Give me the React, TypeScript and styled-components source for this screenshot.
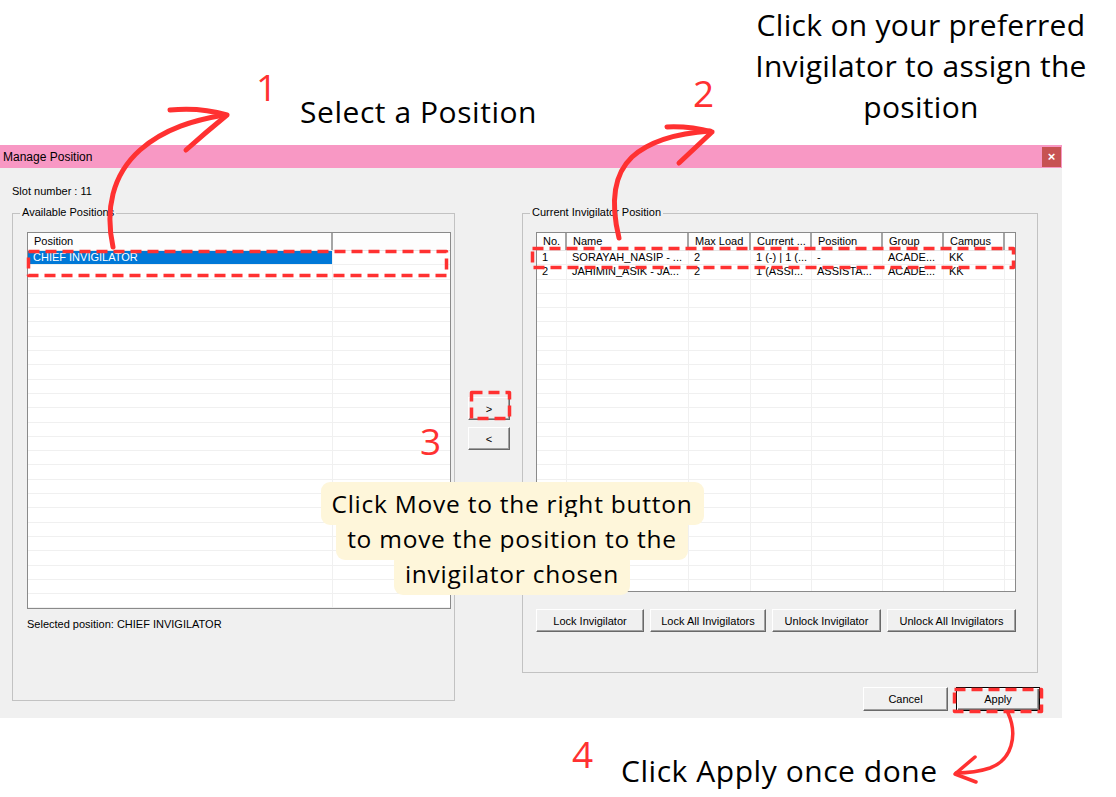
import React from "react";
import styled, { createGlobalStyle } from "styled-components";

const RED = "#ff3131";

const GlobalStyle = createGlobalStyle`
  html, body {
    margin: 0;
    padding: 0;
    background: #ffffff;
  }
  body {
    font-family: "Liberation Sans", Arial, sans-serif;
  }
`;

// ---------- page + annotation canvas ----------

const Page = styled.div`
  position: relative;
  width: 1116px;
  height: 797px;
  overflow: hidden;
  background: #ffffff;
`;

const Note = styled.div<{ $x: number; $y: number }>`
  position: absolute;
  left: ${(p) => p.$x}px;
  top: ${(p) => p.$y}px;
  font-family: "Open Sans", "Noto Sans", sans-serif;
  font-size: 30px;
  line-height: 30px;
  letter-spacing: 0.55px;
  color: #000;
  white-space: nowrap;
`;

const NoteBlock = styled(Note)`
  width: 400px;
  line-height: 41px;
  letter-spacing: 0.3px;
  text-align: center;
`;

const StepNum = styled.div<{ $x: number; $y: number }>`
  position: absolute;
  left: ${(p) => p.$x}px;
  top: ${(p) => p.$y}px;
  font-family: "Open Sans", "Noto Sans", sans-serif;
  font-size: 37px;
  line-height: 36px;
  color: ${RED};
`;

const Callout = styled.div`
  position: absolute;
  left: 262px;
  top: 486px;
  width: 500px;
  text-align: center;
  font-family: "Open Sans", "Noto Sans", sans-serif;
  font-size: 24.5px;
  line-height: 35px;
  letter-spacing: 0.75px;
  color: #000;
`;

const Highlight = styled.span`
  background: #fef6da;
  padding: 5px 11px;
  border-radius: 9px;
  -webkit-box-decoration-break: clone;
  box-decoration-break: clone;
`;

const Overlay = styled.svg`
  position: absolute;
  left: 0;
  top: 0;
  pointer-events: none;
`;

// ---------- dialog ----------

const Dialog = styled.div`
  margin-top: 145px;
  width: 1062px;
  font-size: 11px;
  color: #000;
`;

const TitleBar = styled.div`
  height: 23px;
  box-sizing: border-box;
  padding: 0 1px 0 3px;
  background: #f898c4;
  display: flex;
  align-items: center;
  justify-content: space-between;
`;

const TitleText = styled.span`
  font-size: 12px;
`;

const CloseButton = styled.div`
  width: 19px;
  height: 20px;
  background: #c75252;
  color: #fff;
  display: flex;
  align-items: center;
  justify-content: center;
  font-size: 13px;
  font-weight: bold;
`;

const Body = styled.div`
  height: 550px;
  box-sizing: border-box;
  padding: 17px 0 0 12px;
  background: #f0f0f0;
`;

const Label = styled.div<{ $gap?: number }>`
  line-height: 13px;
  margin-top: ${(p) => p.$gap ?? 0}px;
  white-space: nowrap;
`;

const Columns = styled.div`
  display: flex;
  align-items: flex-start;
  margin-top: 15px;
`;

const Group = styled.div<{ $w: number; $h: number; $left: number }>`
  position: relative;
  width: ${(p) => p.$w}px;
  height: ${(p) => p.$h}px;
  box-sizing: border-box;
  border: 1px solid #c2c2c2;
  padding: 18px 0 0 ${(p) => p.$left}px;
`;

const Caption = styled.span`
  position: absolute;
  top: -8px;
  left: 7px;
  padding: 0 2px;
  line-height: 13px;
  background: #f0f0f0;
  white-space: nowrap;
`;

const MoveColumn = styled.div`
  width: 67px;
  box-sizing: border-box;
  padding: 184px 0 0 13px;
  display: flex;
  flex-direction: column;
  gap: 7px;
`;

const RightColumn = styled.div`
  width: 518px;
  display: flex;
  flex-direction: column;
`;

const ButtonRow = styled.div`
  display: flex;
  gap: 6px;
  margin-top: 17px;
`;

const Footer = styled.div`
  display: flex;
  justify-content: flex-end;
  gap: 8px;
  margin-top: 14px;
`;

const WinButton = styled.button<{ $w: number; $h?: number; $default?: boolean }>`
  width: ${(p) => p.$w}px;
  height: ${(p) => p.$h ?? 23}px;
  padding: 0;
  box-sizing: border-box;
  font-family: "Liberation Sans", Arial, sans-serif;
  font-size: 11px;
  color: #000;
  background: #f0f0f0;
  border: 1px solid;
  border-color: ${(p) => (p.$default ? "#000" : "#fff #696969 #696969 #fff")};
  box-shadow: ${(p) =>
    p.$default
      ? "inset 1px 1px #fff, inset -1px -1px #696969, inset -2px -2px #a0a0a0"
      : "inset -1px -1px #a0a0a0"};
  white-space: nowrap;
`;

// ---------- list view ----------

const ListFrame = styled.div<{ $w: number; $h: number }>`
  width: ${(p) => p.$w}px;
  height: ${(p) => p.$h}px;
  box-sizing: border-box;
  border: 1px solid #8a8a8a;
  background: #fff;
  overflow: hidden;
`;

const HeaderRow = styled.div`
  display: flex;
  height: 18px;
  box-sizing: border-box;
  border-bottom: 1px solid #e5e5e5;
  background: #fdfdfd;
`;

const HeaderCell = styled.div<{ $w?: number }>`
  ${(p) => (p.$w ? `width: ${p.$w}px; flex: none;` : "flex: 1;")}
  box-sizing: border-box;
  padding-left: 6px;
  line-height: 17px;
  border-right: ${(p) => (p.$w ? "2px solid #a5a5a5" : "none")};
  white-space: nowrap;
  overflow: hidden;
`;

const Row = styled.div`
  display: flex;
  height: 14.3px;
  box-sizing: border-box;
  border-bottom: 1px solid #f0f0f0;
`;

const Cell = styled.div<{ $w?: number; $selected?: boolean }>`
  ${(p) => (p.$w ? `width: ${p.$w}px; flex: none;` : "flex: 1;")}
  box-sizing: border-box;
  padding-left: 5px;
  line-height: 13px;
  border-right: ${(p) => (p.$w ? "1px solid #f0f0f0" : "none")};
  background: ${(p) => (p.$selected ? "#0078d7" : "transparent")};
  color: ${(p) => (p.$selected ? "#fff" : "#000")};
  white-space: nowrap;
  overflow: hidden;
`;

type Column = { title: string; width?: number };

const ListView = ({
  columns,
  rows,
  count,
  width,
  height,
  selected,
}: {
  columns: Column[];
  rows: string[][];
  count: number;
  width: number;
  height: number;
  selected?: number;
}) => (
  <ListFrame $w={width} $h={height}>
    <HeaderRow>
      {columns.map((c, i) => (
        <HeaderCell key={i} $w={c.width}>
          {c.title}
        </HeaderCell>
      ))}
    </HeaderRow>
    {Array.from({ length: count }).map((_, r) => (
      <Row key={r}>
        {columns.map((c, i) => (
          <Cell key={i} $w={c.width} $selected={selected === r && i === 0}>
            {rows[r]?.[i] ?? ""}
          </Cell>
        ))}
      </Row>
    ))}
  </ListFrame>
);

const positionColumns: Column[] = [{ title: "Position", width: 305 }, { title: "" }];

const invigilatorColumns: Column[] = [
  { title: "No.", width: 30 },
  { title: "Name", width: 122 },
  { title: "Max Load", width: 62 },
  { title: "Current ...", width: 61 },
  { title: "Position", width: 71 },
  { title: "Group", width: 61 },
  { title: "Campus", width: 61 },
  { title: "" },
];

const invigilators = [
  ["1", "SORAYAH_NASIP - ...", "2", "1 (-) | 1 (...", "-", "ACADE...", "KK"],
  ["2", "JAHIMIN_ASIK - JA...", "2", "1 (ASSI...", "ASSISTA...", "ACADE...", "KK"],
];

const App = () => {
  return (
    <Page>
      <GlobalStyle />
      <Dialog>
        <TitleBar>
          <TitleText>Manage Position</TitleText>
          <CloseButton>×</CloseButton>
        </TitleBar>
        <Body>
          <Label>Slot number : 11</Label>
          <Columns>
            <Group $w={443} $h={488} $left={14}>
              <Caption>Available Positions</Caption>
              <ListView
                columns={positionColumns}
                rows={[["CHIEF INVIGILATOR"]]}
                count={25}
                width={424}
                height={377}
                selected={0}
              />
              <Label $gap={9}>Selected position: CHIEF INVIGILATOR</Label>
            </Group>

            <MoveColumn>
              <WinButton $w={42}>&gt;</WinButton>
              <WinButton $w={42}>&lt;</WinButton>
            </MoveColumn>

            <RightColumn>
              <Group $w={516} $h={460} $left={13}>
                <Caption>Current Invigilator Position</Caption>
                <ListView
                  columns={invigilatorColumns}
                  rows={invigilators}
                  count={24}
                  width={480}
                  height={360}
                />
                <ButtonRow>
                  <WinButton $w={108}>Lock Invigilator</WinButton>
                  <WinButton $w={116}>Lock All Invigilators</WinButton>
                  <WinButton $w={109}>Unlock Invigilator</WinButton>
                  <WinButton $w={129}>Unlock All Invigilators</WinButton>
                </ButtonRow>
              </Group>
              <Footer>
                <WinButton $w={85} $h={24}>
                  Cancel
                </WinButton>
                <WinButton $w={84} $h={24} $default>
                  Apply
                </WinButton>
              </Footer>
            </RightColumn>
          </Columns>
        </Body>
      </Dialog>

      {/* annotations */}
      <StepNum $x={256} $y={69}>1</StepNum>
      <Note $x={300} $y={97}>Select a Position</Note>

      <StepNum $x={693} $y={75}>2</StepNum>
      <NoteBlock $x={721} $y={4}>
        Click on your preferred
        <br />
        Invigilator to assign the
        <br />
        position
      </NoteBlock>

      <StepNum $x={420} $y={423}>3</StepNum>
      <Callout>
        <Highlight>
          Click Move to the right button
          <br />
          to move the position to the
          <br />
          invigilator chosen
        </Highlight>
      </Callout>

      <StepNum $x={572} $y={736}>4</StepNum>
      <Note $x={621} $y={756}>Click Apply once done</Note>

      <Overlay width={1116} height={797} viewBox="0 0 1116 797">
        <g fill="none" stroke={RED} strokeLinecap="round" strokeLinejoin="round">
          <g strokeWidth={3.5} strokeDasharray="11 6" strokeLinecap="butt">
            <rect x={28.5} y={251.5} width={418} height={24} />
            <rect x={532.5} y={248.5} width={481} height={19} />
            <rect x={471.5} y={392.5} width={38} height={26} />
            <rect x={954.5} y={689.5} width={87} height={22} />
          </g>
          <g strokeWidth={5}>
            <path d="M113 247 C105 210 112 175 140 150 C165 128 195 120 224 115" />
            <path d="M170 110 Q200 107 227 115 Q205 133 186 150" />
            <path d="M619 238 C611 205 613 175 632 157 C652 139 680 133 710 131" />
            <path d="M667 127 Q690 126 712 132 Q695 148 679 163" />
          </g>
          <g strokeWidth={3.5}>
            <path d="M1008 713 C1018 735 1012 760 990 768 C978 772 966 773 956 773" />
            <path d="M975 757 L955 774 L976 782" />
          </g>
        </g>
      </Overlay>
    </Page>
  );
};

export default App;
